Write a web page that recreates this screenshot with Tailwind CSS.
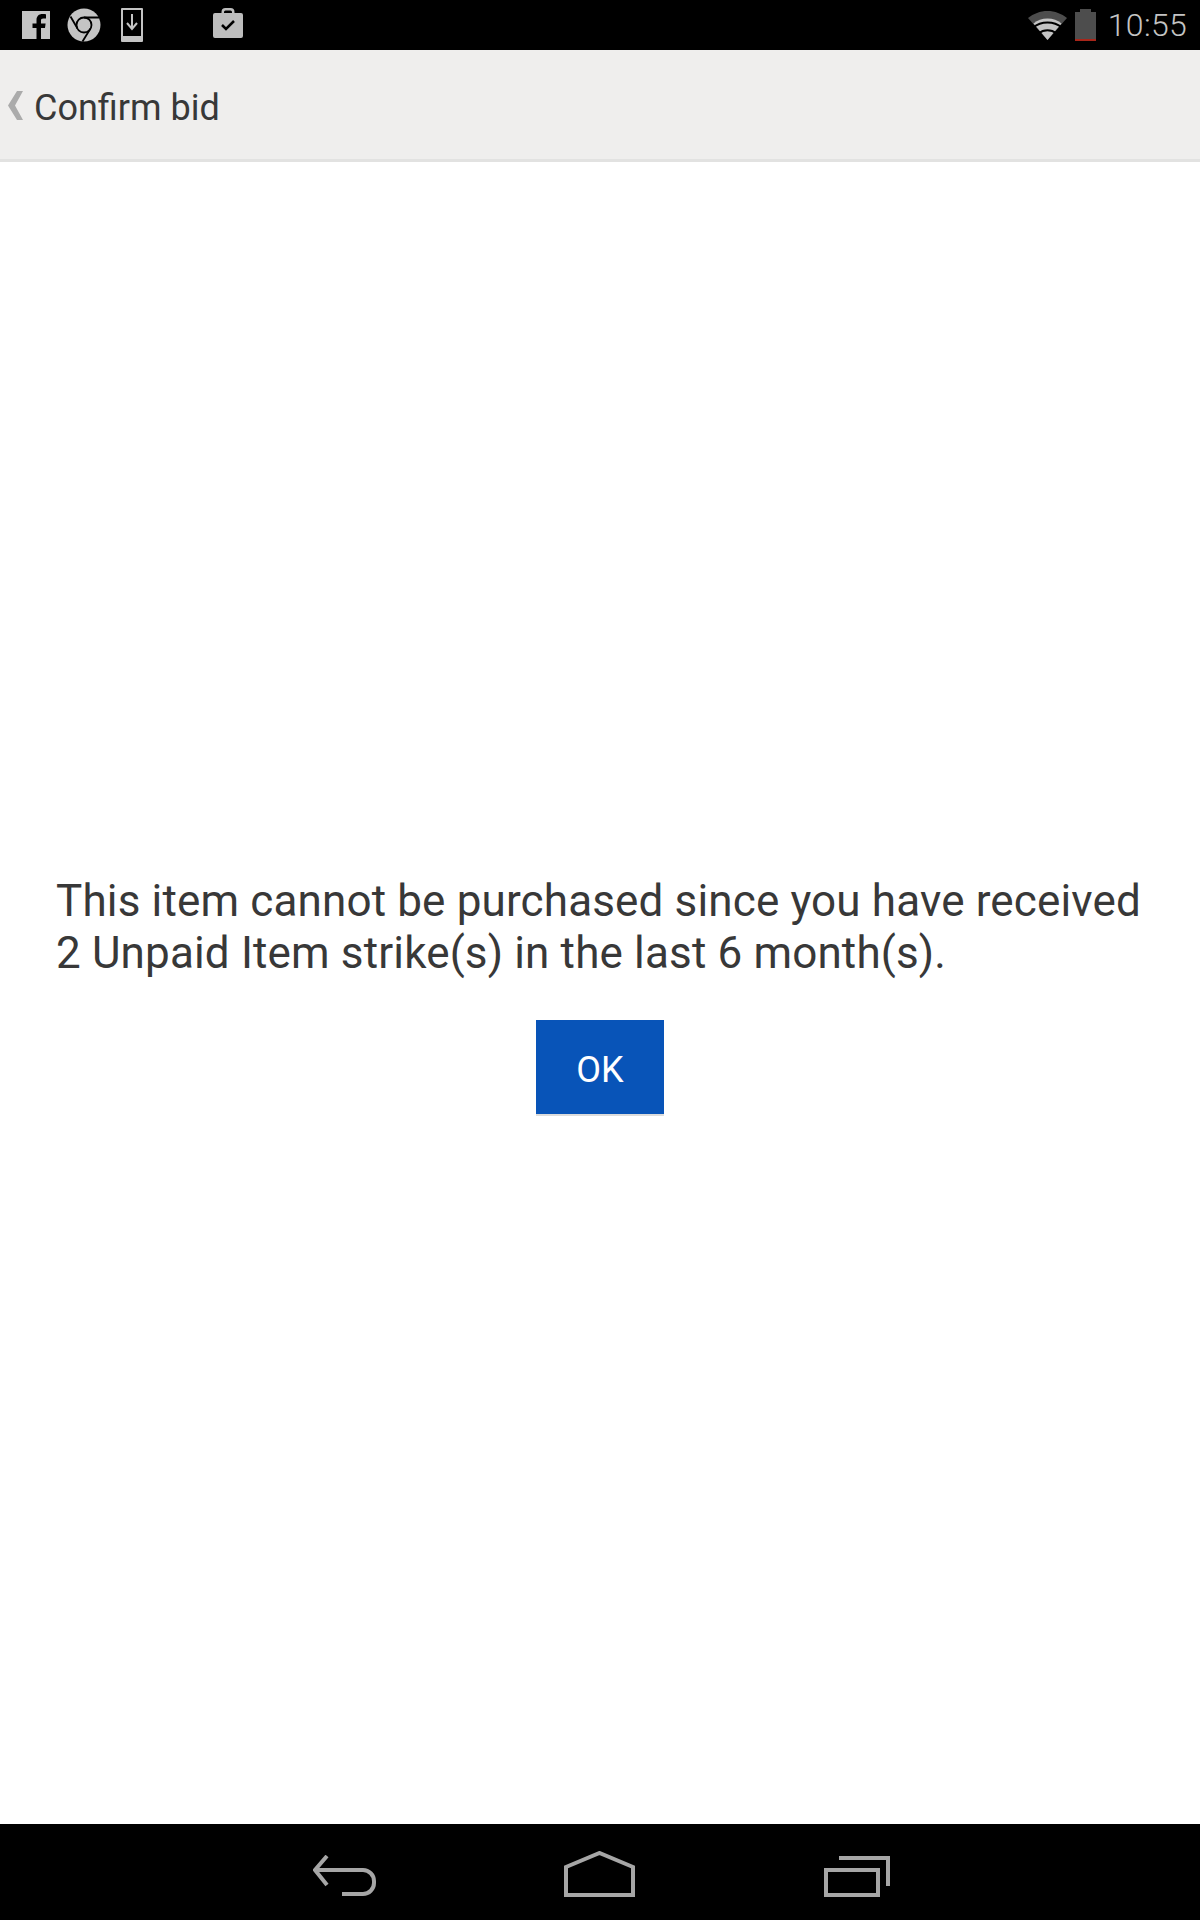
<!DOCTYPE html>
<html lang="en">
<head>
    <meta charset="UTF-8">
    <meta name="viewport" content="width=device-width, initial-scale=1.0">
    <title>Confirm bid</title>
    <script src="https://cdn.jsdelivr.net/npm/@tailwindcss/browser@4"></script>
</head>
<body class="bg-white font-['Roboto',sans-serif]">
    <div class="flex flex-col w-[1200px] h-[1920px]">
        <!-- Status bar -->
        <div class="flex items-center h-[50px] bg-black pl-[22px] pr-[13px]">
            <svg class="w-[28px] h-[28px]" viewBox="0 0 28 28"><path fill="#c4c4c4" d="M0 0h28v28h-9V17h4l.6-4.6H19V9.600c0-1.400.4-2.200 2.300-2.200H24V3.300c-.6-.1-2-.2-3.600-.2-3.500 0-5.900 2.100-5.900 6v3.300h-4V17h4v11H0z"/></svg>
            <svg class="w-[34px] h-[34px] ml-[17px]" viewBox="0 0 34 34">
                <circle cx="17" cy="17" r="16.500" fill="#c4c4c4"/>
                <circle cx="17" cy="17" r="7.500" fill="none" stroke="#000" stroke-width="1.800"/>
                <path d="M17 9.500h15M10.500 20.500 3.500 8.500M23.500 20.500 15.500 33.500" fill="none" stroke="#000" stroke-width="1.800"/>
            </svg>
            <svg class="w-[22px] h-[34px] ml-[20px]" viewBox="0 0 22 34">
                <path fill="#c4c4c4" fill-rule="evenodd" d="M1 0h20a1 1 0 0 1 1 1v32a1 1 0 0 1-1 1H1a1 1 0 0 1-1-1V1a1 1 0 0 1 1-1zm1 2v26h18V2z"/>
                <path fill="none" stroke="#c4c4c4" stroke-width="2" d="M11 6v14M6 15l5 6 5-6"/>
            </svg>
            <svg class="w-[30px] h-[30px] ml-[70px] mb-[4px]" viewBox="0 0 30 30">
                <path fill="#bdbdbd" fill-rule="evenodd" d="M2 5h6.500V4a4 4 0 0 1 4-4h5a4 4 0 0 1 4 4v1H28a2 2 0 0 1 2 2v21a2 2 0 0 1-2 2H2a2 2 0 0 1-2-2V7a2 2 0 0 1 2-2zm9 0h8V4a1.500 1.500 0 0 0-1.500-1.500h-5A1.500 1.500 0 0 0 11 4z"/>
                <path fill="none" stroke="#000" stroke-width="2.500" d="M9 17l4 4 8-8"/>
            </svg>
            <svg class="w-[39px] h-[29px] ml-auto" viewBox="0 0 39 29">
                <path fill="#4d4d4d" d="M19.500 0C12 0 5.500 2.700 0 7l19.500 22L39 7C33.500 2.700 27 0 19.500 0z"/>
                <path fill="#c4c4c4" d="M19.500 7.500C14 7.500 9.500 9.300 5.500 12.500L19.500 29l14-16.500c-4-3.200-8.500-5-14-5z"/>
                <path fill="none" stroke="#000" stroke-width="2" d="M5 16.500c4-3.200 9-5 14.500-5s10.500 1.800 14.500 5M10.500 22.500c2.500-2 5.500-3.200 9-3.200s6.500 1.200 9 3.200"/>
            </svg>
            <div class="flex flex-col items-center w-[21px] h-[32px] ml-[8px]">
                <div class="w-[11px] h-[3px] bg-[#4d4d4d]"></div>
                <div class="w-full h-[27px] bg-[#4d4d4d]"></div>
                <div class="w-full h-[2px] bg-[#a8261a]"></div>
            </div>
            <span class="ml-[12px] text-[32px] leading-none text-[#c4c4c4] font-light tracking-[0.3px]">10:55</span>
        </div>

        <!-- Header -->
        <div class="flex items-center h-[112px] bg-[#efeeed] border-b-[3px] border-[#e2e2e1] pl-[8px]">
            <svg class="w-[15px] h-[29px] mt-[1px]" viewBox="0 0 15 29"><path fill="#ababab" d="M9 0h6L7 14.500 15 29H9L0 14.500z"/></svg>
            <span class="ml-[11px] mt-[6px] text-[36px] leading-none text-[#383838]">Confirm bid</span>
        </div>

        <!-- Message -->
        <div class="flex flex-1 flex-col justify-center px-[56px] pt-[4px]">
            <p class="mt-[1px] text-[44px] tracking-[0.15px] leading-[52px] text-[#383838]">This item cannot be purchased since you have received 2 Unpaid Item strike(s) in the last 6 month(s).</p>
            <button class="self-center w-[128px] h-[96px] mt-[41px] pt-[5px] bg-[#0854b8] border-b-2 border-[#dcdcdc] text-[36px] text-white">OK</button>
        </div>

        <!-- Nav bar -->
        <div class="flex items-center justify-center gap-[189px] h-[96px] bg-black">
            <svg class="w-[64px] h-[42px] mt-[8px] ml-[2px] mr-[-2px]" viewBox="0 0 64 42" fill="none" stroke="#a6a6a6" stroke-width="4">
                <path d="M14 1 2 15l12 15"/>
                <path d="M2 15h48a11 11 0 0 1 11 11v2a11 11 0 0 1-11 11H29" />
            </svg>
            <svg class="w-[71px] h-[46px] mt-[4px]" viewBox="0 0 71 46" fill="none" stroke="#a6a6a6" stroke-width="4">
                <path d="M2 44V16L35.500 2 69 16v28z"/>
            </svg>
            <svg class="w-[66px] h-[41px] mt-[9px]" viewBox="0 0 66 41" fill="none" stroke="#a6a6a6" stroke-width="4">
                <path d="M15 2h49v28"/>
                <path d="M2 14h52v25H2z"/>
            </svg>
        </div>
    </div>
</body>
</html>
